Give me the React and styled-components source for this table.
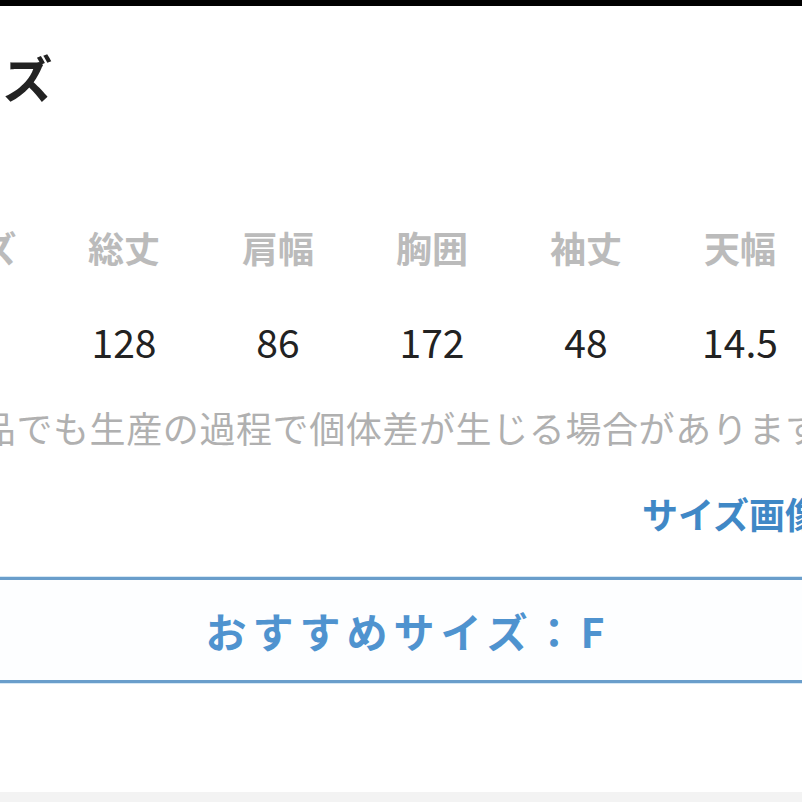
import React from "react";
import styled, { createGlobalStyle } from "styled-components";

const GlobalStyle = createGlobalStyle`
  html, body {
    margin: 0;
    padding: 0;
    background: #ffffff;
    overflow: hidden;
  }
  body {
    font-family: "Noto Sans CJK JP", "Noto Sans", sans-serif;
  }
`;

const columns = [
  { label: "サイズ", value: "F" },
  { label: "総丈", value: "128" },
  { label: "肩幅", value: "86" },
  { label: "胸囲", value: "172" },
  { label: "袖丈", value: "48" },
  { label: "天幅", value: "14.5" },
];

const App = () => {
  return (
    <Page>
      <GlobalStyle />
      <TopBar />
      <Content>
        <Heading>サイズ</Heading>

        <SizeTable>
          {columns.map((c) => (
            <HeadCell key={c.label}>{c.label}</HeadCell>
          ))}
          {columns.map((c) => (
            <ValueCell key={c.label}>{c.value}</ValueCell>
          ))}
        </SizeTable>

        <Note>同じ商品でも生産の過程で個体差が生じる場合があります。</Note>

        <LinkRow>
          <SizeLink href="#">サイズ画像を見る</SizeLink>
        </LinkRow>

        <Recommend>
          <RecommendText>おすすめサイズ：F</RecommendText>
        </Recommend>
      </Content>
      <Footer />
    </Page>
  );
};

export default App;

const Page = styled.div`
  width: 802px;
  height: 802px;
  display: flex;
  flex-direction: column;
  overflow: hidden;
  background: #ffffff;
`;

const TopBar = styled.div`
  height: 6px;
  flex-shrink: 0;
  background: #000000;
`;

const Content = styled.div`
  flex: 1;
  display: flex;
  flex-direction: column;
`;

const Heading = styled.h1`
  margin: 45px 0 0 -96px;
  font-size: 50px;
  line-height: 1;
  font-weight: 700;
  color: #222222;
  white-space: nowrap;
`;

const SizeTable = styled.div`
  display: grid;
  grid-template-columns: repeat(6, 154px);
  grid-auto-rows: auto;
  row-gap: 57px;
  margin: 128px 0 0 -107px;
  width: 924px;
`;

const HeadCell = styled.div`
  text-align: center;
  font-size: 36px;
  line-height: 1;
  font-weight: 700;
  color: #bbbbbb;
  white-space: nowrap;

  &:first-child {
    padding-right: 14px;
  }
`;

const ValueCell = styled.div`
  text-align: center;
  font-size: 39px;
  line-height: 1;
  font-weight: 400;
  color: #222222;
`;

const Note = styled.p`
  margin: 48px 0 0 -130px;
  font-size: 36px;
  line-height: 1;
  letter-spacing: 0.6px;
  font-weight: 400;
  color: #b0b0b0;
  white-space: nowrap;
`;

const LinkRow = styled.div`
  display: flex;
  padding-left: 642px;
  margin-top: 50px;
  white-space: nowrap;
`;

const SizeLink = styled.a`
  font-size: 36px;
  line-height: 1;
  font-weight: 700;
  color: #4088c6;
  text-decoration: none;
`;

const Recommend = styled.div`
  margin: 46px -12px 0 -12px;
  height: 100px;
  display: flex;
  align-items: center;
  justify-content: center;
  border-top: 3px solid #6a9ecb;
  border-bottom: 3px solid #6a9ecb;
  background: #fdfeff;
  box-shadow: 0 -1px 0 #d6e8f5, 0 1px 0 #d6e8f5;
`;

const RecommendText = styled.span`
  font-size: 41px;
  line-height: 1;
  font-weight: 700;
  letter-spacing: 6px;
  color: #4f93cf;
  padding-left: 14px;
`;

const Footer = styled.div`
  height: 10px;
  flex-shrink: 0;
  background: #f3f3f3;
`;
